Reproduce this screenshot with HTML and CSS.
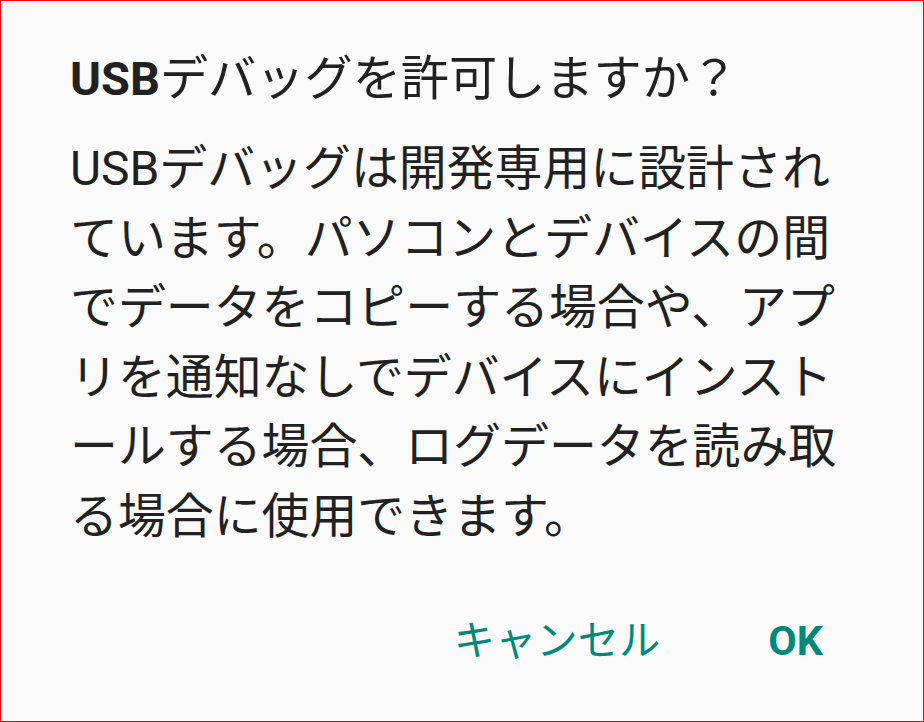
FILE: index.html
```html
<!DOCTYPE html>
<html lang="ja">
<head>
<meta charset="utf-8">
<link rel="stylesheet" href="styles.css">
</head>
<body>
<div class="frame">
  <div class="dialog">
    <h1 class="title"><span class="latin-bold">USB</span>デバッグを許可しますか？</h1>
    <div class="message">
      <span class="line">USBデバッグは開発専用に設計され</span>
      <span class="line">ています。パソコンとデバイスの間</span>
      <span class="line">でデータをコピーする場合や、アプ</span>
      <span class="line">リを通知なしでデバイスにインスト</span>
      <span class="line">ールする場合、ログデータを読み取</span>
      <span class="line">る場合に使用できます。</span>
    </div>
    <div class="actions">
      <span class="btn btn-cancel">キャンセル</span>
      <span class="btn btn-ok">OK</span>
    </div>
  </div>
</div>
</body>
</html>
```
FILE: styles.css
```css
html, body {
  margin: 0;
  padding: 0;
  background: #fafafa;
}
.frame {
  box-sizing: border-box;
  width: 924px;
  height: 722px;
  border: 1px solid #ff0000;
  background: #fafafa;
  font-family: Roboto, "Noto Sans CJK JP", sans-serif;
  color: #212121;
}
.dialog {
  padding: 48px 0 0 69px;
}
.title {
  margin: 0;
  font-size: 48.2px;
  line-height: 60px;
  font-weight: 400;
  white-space: nowrap;
}
.latin-bold {
  font-weight: 700;
  font-size: 47px;
}
.message {
  margin-top: 26px;
  font-size: 47.9px;
  line-height: 69.5px;
}
.line {
  display: block;
  white-space: nowrap;
}
.actions {
  margin-top: 59px;
  display: flex;
  justify-content: flex-end;
  align-items: center;
  gap: 108px;
  padding-right: 100px;
  font-size: 41.3px;
  line-height: 60px;
  color: #00897b;
}
.btn-ok {
  font-weight: 700;
}
```
